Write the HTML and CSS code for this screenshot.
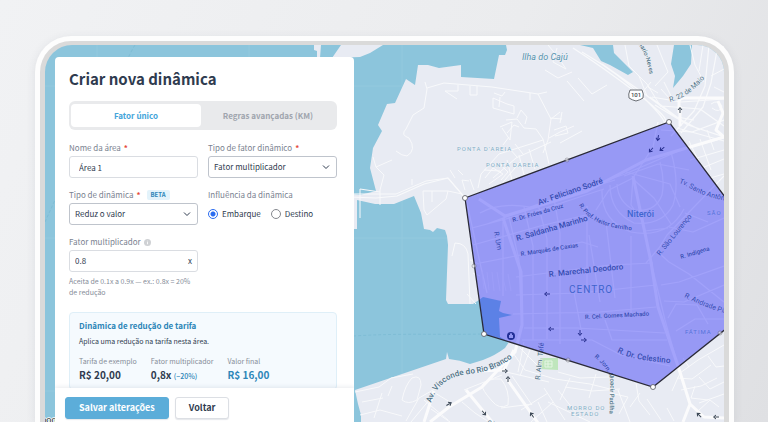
FILE: index.html
```html
<!DOCTYPE html>
<html lang="pt-BR">
<head>
<meta charset="utf-8">
<meta name="viewport" content="width=device-width, initial-scale=1">
<title>Criar nova dinâmica</title>
<link rel="stylesheet" href="styles.css">
</head>
<body>
<div class="device">
<main class="screen">
<svg class="map" viewBox="45 45 679 377" preserveAspectRatio="xMinYMin slice" role="img" aria-label="Mapa de Niterói">
  <defs>
    <path id="p-visconde" d="M431 403C438 381 453 376 469 374C487 372 498 368 514 357"/>
    <path id="p-heitor" d="M579 205C586 218 602 230 645 231"/>
    <path id="p-antonio" d="M679 183C692 187 698 198 740 203"/>
    <path id="p-padilha" d="M594 357C606 367 612 374 610 390L609 435"/>
    <path id="p-celestino" d="M617 352C630 359 645 361 680 364"/>
    <path id="p-andrade" d="M684 297C694 302 710 310 745 319"/>
    <path id="p-neves" d="M637 43C645 52 648 62 652 88"/>
    <path id="p-maio" d="M670 102C682 99 694 92 708 74"/>
    <path id="arrow" d="M-3 0H2M0 -2L2.500 0L0 2"/>
  </defs>
  <rect class="water" x="45" y="45" width="679" height="377"/>
  <path class="grid-line" d="M97 45V422M249 45V422M402 45V422M45 86H724M45 238H724M45 391H724"/>
  <path class="ferry" d="M135 45Q126 60 122 75M45 222L55 200M353 336C400 333 440 335 484 334"/>
  <path class="land" d="M314 45H321L320 58H317V51L314 50ZM332 58L341 45H383L370 53L360 57Z"/>
  <path class="land" d="M506 45L507 50L505 55H499L494 79L461 77V65L439 68L428 65H418L415 85L406 79L395 103L387 104L378 125L382 131L373 148L370 168L376 191L360 195L350 194V229H357V200L375 204H394L414 196L421 213L424 229L430 230L433 232L437 228L445 230L447 236L448 245L446 300L448 304H473L479 300L483 297L501 301L499 311L503 313L512 315L499 318L500 337L509 342L505 348Q496 355 483 360L470 364Q460 360 449 359L447 352L446 359L355 390L358 404L361 415V422H724V45Z"/>
  <path class="water" d="M580 45H613L614 53L633 72L628 75L610 65L601 61L593 48ZM674 45H692L691 64L683 76L673 88L675 76L671 64Z"/>
  <path class="park" d="M540 358H558V370L540 369Z"/>
  <path class="park-mark" d="M545 361H552V367H545ZM548 361V367M545 364H552"/>

  <g class="roads thin">
    <path d="M425 82L427 89L424 108L413 115L406 129Q400 135 409 138Q417 150 407 156Q402 156 396 151M427 88L444 83L492 87L538 94L551 119L548 140L543 153M445 91H458V85M445 91L457 99M470 86V95H477V86M530 93V100M538 94L547 92M551 119L560 112M549 138L560 132L574 126"/>
    <path d="M493 98L507 104L514 106L514 114L493 108ZM500 97L499 107M494 93L502 96L505 92M506 120L517 119L524 128L536 129L543 139M500 127L512 122L510 140L502 128M517 118L521 110L527 117L525 124M507 133L514 125L519 127M509 137L503 145"/>
    <path d="M360 189V218M360 189L380 192M380 205V190L384 175L376 167L392 160M376 167L373 157M353 194L396 194L426 181L448 178L465 198M423 191H448L446 199L427 215L424 210ZM432 191V202M448 191L462 194M412 185V179M455 178L450 170M463 175L458 170M465 190L462 180L469 181M474 190L470 179"/>
    <path d="M478 188L481 174L499 154L543 140M493 178L516 158L551 142M500 186L520 162M512 180L507 160M524 175L519 155M535 169L529 149M549 164L543 139M485 178L493 168L503 174L489 184M499 163L508 172L501 180M509 148L517 157M515 144L523 154M484 170L500 171M489 164L505 164"/>
    <path d="M548 45L558 57L566 69L553 62L557 48M572 72L558 78L545 70M550 118L562 119M554 130L566 126L568 133L555 136M562 112L560 123M560 143L582 131M578 78L592 94L607 85M567 81L584 101"/>
    <path d="M625 45L629 66L647 84L661 107M639 76L647 96M657 45L663 60L668 72L655 86M664 82L671 96M648 87L658 93M651 82L641 94M661 89L670 99M690 45L695 65L704 82M703 45L699 71M711 76L724 69M714 87L724 92M711 104Q718 99 722 106Q720 114 712 108"/>
    <path d="M690 160L724 150M689 141L702 168L724 159M700 139L711 170M677 128L724 141M707 130L714 150M710 178L724 174"/>
    <path d="M452 256L455 243Q466 243 468 254L470 304M467 294L476 304M470 260L479 264M473 273L480 276"/>
    <path d="M355 392L379 387L391 378L413 374M360 415L380 410L402 416M362 402L383 398M382 393L374 418M388 396L392 386M402 400Q405 385 412 378Q421 374 421 385L417 400Q408 405 402 400M406 421L419 398L440 386M411 422L435 393L450 402M424 400L448 420M431 409L450 422M462 402L475 413L489 422M464 390L502 375M482 385Q488 378 501 379Q510 390 508 405Q499 410 492 401Q482 390 482 385"/>
    <path d="M513 353L525 370L555 379L590 384L610 389M520 348L540 368M524 342L518 372M530 350L520 376M502 371L549 382M512 376L532 405M521 410L548 393M531 422L553 402M544 388L565 420M558 390L580 418M570 378L560 400M501 408L532 404M548 402L590 422M538 402L547 422"/>
    <path d="M558 372L580 378L609 377M565 387L592 391L620 389M596 374L589 398M610 393L628 397L619 414M618 390L630 422M636 383L639 401L650 415M640 393L630 407M647 399L661 420M667 408L674 421M672 391L680 373L698 360L724 345M677 378L692 379L711 365M681 390L701 386L717 378M689 367L683 358M695 386L691 398L708 400M699 403L724 394M698 411L710 400L719 407M699 377L710 389L724 382M708 356L716 367L724 366"/>
  </g>
  <g class="roads medium">
    <path d="M350 197L376 198L397 196L424 184L448 178L466 199"/>
    <path d="M573 48Q604 68 638 94T664 122M582 52Q620 74 646 100T661 124M602 64L639 90L676 117L700 130M709 45L705 86L694 111L671 136M718 45L711 83L703 107L681 133M652 97L681 102L724 99M655 105L688 125L724 137M661 130L692 132L724 120M650 97L677 117L694 120M662 106L700 109L724 126"/>
    <path d="M466 199L472 226L480 263L487 293M480 213Q500 202 530 207L625 174L681 150L724 138M487 224L560 197L615 180M472 228L540 210L604 189M473 245L540 226L590 214M480 263L531 253L582 242L598 247M516 277L610 265L653 263M516 295L580 293L656 285M513 314L600 312L656 307M524 328L577 328L665 333M522 340L592 340L621 355L670 366M503 296V222M521 310L519 260L509 217M533 340V246L524 207M547 339V239L538 204M560 344V233L554 198M574 292L583 340M587 293V206M600 302L589 235M615 298L606 222M631 316V236M605 320L612 340L667 340"/>
    <path d="M658 122L653 147L633 178L631 205L643 222L651 262L665 320L679 370M633 178L609 190L596 210M634 180L654 198L671 224M626 172L670 184L680 207M624 176L658 164L689 170M610 185Q610 212 634 223Q662 226 673 205Q680 183 671 152M617 184Q618 202 634 210Q655 213 662 195Q665 180 660 162M602 190Q601 221 631 232Q668 239 684 209M645 231L668 228M646 263L659 248L667 235L724 176M659 253L669 262L689 274L724 302M661 285L679 282L724 266M664 301L684 302L724 285M668 318L676 304L697 305L708 324M676 331L695 319L724 319M669 227L693 232L724 218M685 213L708 222"/>
  </g>
  <g class="roads wide">
    <path d="M633 176L651 262L658 307L679 369L690 404L704 417L724 418M690 404L683 422M503 218L521 272L522 325L515 352L482 387L449 407L430 422M479 199L505 216L587 191L646 160L724 137M679 113V101Q680 98 684 98H724M680 106V126M718 101L723 113L716 130L724 137"/>
    <path d="M476 371L504 370L514 350M507 379L543 430M466 390L493 423M424 422L434 391"/>
  </g>
  <path class="pier" d="M482 272L484 289M487 272L489 290M492 272L494 291M497 272L500 291M502 273L506 291M508 274L511 291"/>

  <g class="label street" font-size="8">
    <text transform="translate(539 205) rotate(-19)">Av. Feliciano Sodré</text>
    <text transform="translate(517 241) rotate(-16)">R. Saldanha Marinho</text>
    <text transform="translate(549 277) rotate(-6)">R. Marechal Deodoro</text>
    <text><textPath href="#p-celestino">R. Dr. Celestino</textPath></text>
    <text><textPath href="#p-visconde">Av. Visconde do Rio Branco</textPath></text>
  </g>
  <g class="label street minor" font-size="7">
    <text transform="translate(660 256) rotate(-51)">R. São Lourenço</text>
    <text transform="translate(494 232) rotate(80)">R. Um</text>
    <text transform="translate(540 380) rotate(-84)">R. Alm. Tefé</text>
    <text transform="translate(491 426) rotate(-50)">R.</text>
    <text><textPath href="#p-antonio">Tv. Santo Antônio</textPath></text>
    <text><textPath href="#p-andrade">R. Andrade Pinto</textPath></text>
    <text><textPath href="#p-maio">R. 22 de Maio</textPath></text>
  </g>
  <g class="label street" font-size="6">
    <text transform="translate(513 222) rotate(-16)">R. Dr. Fróes da Cruz</text>
    <text transform="translate(521 256) rotate(-9)">R. Marquês de Caxias</text>
    <text transform="translate(585 319) rotate(-3)">R. Cel. Gomes Machado</text>
    <text transform="translate(681 259) rotate(-17)">R. Indígena</text>
    <text><textPath href="#p-heitor">R. Prof. Heitor Carrilho</textPath></text>
    <text><textPath href="#p-padilha">R. Jorn. Moacir Padilha</textPath></text>
    <text><textPath href="#p-neves">Mario-Neves</textPath></text>
  </g>
  <g class="label place">
    <text class="island" x="522" y="60">Ilha do Cajú</text>
    <text x="457" y="151">PONTA D'AREIA</text>
    <text x="486" y="167">PONTA DAREIA</text>
    <text class="district" x="569" y="293">CENTRO</text>
    <text class="city" x="627" y="217">Niterói</text>
    <text x="707" y="215">SÃO LOURENÇO</text>
    <text x="685" y="334">FÁTIMA</text>
    <text x="567" y="410">MORRO DO</text>
    <text x="571" y="416">ESTADO</text>
  </g>
  <g class="arrows">
    <use href="#arrow" transform="translate(680 110) rotate(-90)"/>
    <use href="#arrow" transform="translate(658 138) rotate(100)"/>
    <use href="#arrow" transform="translate(651 150) rotate(130)"/>
    <use href="#arrow" transform="translate(662 149) rotate(140)"/>
    <use href="#arrow" transform="translate(547 294) rotate(180)"/>
    <use href="#arrow" transform="translate(551 329) rotate(180)"/>
    <use href="#arrow" transform="translate(580 333) rotate(90)"/>
    <use href="#arrow" transform="translate(584 340)"/>
    <use href="#arrow" transform="translate(505 371)"/>
    <use href="#arrow" transform="translate(508 379) rotate(-90)"/>
    <use href="#arrow" transform="translate(449 404) rotate(-30)"/>
    <use href="#arrow" transform="translate(484 413) rotate(50)"/>
    <use href="#arrow" transform="translate(532 415) rotate(-125)"/>
    <use href="#arrow" transform="translate(699 415) rotate(-135)"/>
    <use href="#arrow" transform="translate(716 417) rotate(180)"/>
  </g>
  <circle cx="511" cy="336" r="4" fill="#31455f"/>
  <path d="M509 335H513V338H509ZM510 335V334Q511 332 512 334V335" fill="#dfe4ee"/>
  <path class="shield" d="M630 90H642Q644 94 643 98Q640 100 636 101Q632 100 629 98Q628 94 630 90Z"/>
  <text class="shield-text" x="636" y="97">101</text>

  <path class="area" d="M465 198L669 122L787 280L653 387L484 334Z"/>
  <g class="handle mid"><circle cx="567" cy="160" r="2"/><circle cx="474" cy="266" r="2"/><circle cx="568" cy="360" r="2"/><circle cx="720" cy="333" r="2"/></g>
  <g class="handle"><circle cx="465" cy="198" r="2.500"/><circle cx="669" cy="122" r="2.500"/><circle cx="484" cy="334" r="2.500"/><circle cx="653" cy="387" r="2.500"/></g>
  <text class="credit" x="35" y="423">Google</text>
</svg>

<form class="panel">
  <div class="panel-body">
    <h1>Criar nova dinâmica</h1>
    <div class="tabs" role="tablist">
      <button type="button" role="tab" aria-selected="true" class="tab active">Fator único</button>
      <button type="button" role="tab" aria-selected="false" class="tab">Regras avançadas (KM)</button>
    </div>
    <div class="fields">
      <div class="field">
        <label for="nome">Nome da área <b class="req">*</b></label>
        <input class="control indent" id="nome" type="text" value="Área 1">
      </div>
      <div class="field">
        <label for="tipo-fator">Tipo de fator dinâmico <b class="req">*</b></label>
        <div class="select-wrap">
          <select class="control" id="tipo-fator"><option>Fator multiplicador</option></select>
          <svg class="chevron" viewBox="0 0 8 8"><path d="M1 2.500L4 5.500L7 2.500"/></svg>
        </div>
      </div>
      <div class="field">
        <label for="tipo-dinamica">Tipo de dinâmica <b class="req">*</b> <span class="badge">BETA</span></label>
        <div class="select-wrap">
          <select class="control" id="tipo-dinamica"><option>Reduz o valor</option></select>
          <svg class="chevron" viewBox="0 0 8 8"><path d="M1 2.500L4 5.500L7 2.500"/></svg>
        </div>
      </div>
      <fieldset class="field">
        <legend>Influência da dinâmica</legend>
        <div class="radios">
          <label><input type="radio" name="influencia" checked>Embarque</label>
          <label><input type="radio" name="influencia">Destino</label>
        </div>
      </fieldset>
      <div class="field">
        <label for="fator">Fator multiplicador
          <svg class="info" viewBox="0 0 8 8"><circle cx="4" cy="4" r="4"/><path d="M4 3.500V6M4 2V2.800"/></svg>
        </label>
        <div class="control suffixed"><input id="fator" type="text" value="0.8"><span>x</span></div>
        <p class="help">Aceita de 0.1x a 0.9x — ex.: 0.8x = 20% de redução</p>
      </div>
    </div>
    <section class="summary">
      <h2>Dinâmica de redução de tarifa</h2>
      <p>Aplica uma redução na tarifa nesta área.</p>
      <dl>
        <div><dt>Tarifa de exemplo</dt><dd>R$ 20,00</dd></div>
        <div><dt>Fator multiplicador</dt><dd>0,8x <small>(−20%)</small></dd></div>
        <div><dt>Valor final</dt><dd class="blue">R$ 16,00</dd></div>
      </dl>
    </section>
  </div>
  <footer class="actions">
    <button class="btn primary" type="submit">Salvar alterações</button>
    <button class="btn" type="button">Voltar</button>
  </footer>
</form>
</main>
</div>
</body>
</html>
```
FILE: styles.css
```css
* { box-sizing: border-box; }

body {
  margin: 0;
  height: 100vh;
  overflow: hidden;
  display: flex;
  padding: 36px 34px 0 35px;
  background: linear-gradient(115deg, #f1f2f4 0%, #ebecee 55%, #dfe0e3 100%);
  font-family: "Noto Sans CJK SC", "Noto Sans", sans-serif;
  font-size: 8px;
  line-height: 12px;
  color: #2f3b4f;
}

h1, h2, p, dl, dd, fieldset, legend { margin: 0; padding: 0; border: 0; }
button, input, select { font: inherit; color: inherit; margin: 0; }

.device {
  flex: 1;
  display: flex;
  border: 5px solid #fdfdfd;
  border-bottom: 0;
  border-radius: 36px 36px 0 0;
  background: #dadada;
  padding: 4px 5px 0;
  box-shadow: 0 2px 10px rgba(60, 70, 90, .1);
}

.screen {
  position: relative;
  flex: 1;
  display: grid;
  grid-template-columns: 299fr 370fr;
  grid-template-rows: minmax(0, 1fr);
  padding: 12px 0 0 10px;
  overflow: hidden;
  border-radius: 27px 27px 0 0;
}

/* map */
.map { position: absolute; inset: 0; width: 100%; height: 100%; font-family: Roboto, sans-serif; }
.water { fill: #8cc5dc; }
.land { fill: #e8ebf3; }
.park { fill: #bfe6bd; }
.park-mark { fill: none; stroke: #e4f5e3; }
.grid-line { fill: none; stroke: #93c9de; }
.ferry { fill: none; stroke: #76b7d0; stroke-dasharray: 3 2; stroke-width: .6; }
.roads { fill: none; stroke: #f8f9fb; stroke-linejoin: round; }
.thin { stroke-width: 1; }
.medium { stroke-width: 1.2; }
.wide { stroke-width: 3; stroke: #fbfbfc; }
.pier { fill: none; stroke: #f1f2f8; }
.label { paint-order: stroke; stroke: #eef1f6; stroke-width: 1; stroke-linejoin: round; }
.street { fill: #4f7286; font-weight: 500; }
.minor { font-weight: 400; }
.place { fill: #7fadc6; font-size: 6px; letter-spacing: 1px; }
.island { font-size: 9px; font-style: italic; fill: #5693af; letter-spacing: 0; }
.district { font-size: 10px; fill: #5f96b3; }
.city { font-size: 9px; font-weight: 500; fill: #5f9bb8; letter-spacing: 0; }
.arrows { fill: none; stroke: #3c4856; stroke-width: 1; }
.shield { fill: #fff; stroke: #6b6f75; }
.shield-text { font-size: 6px; font-weight: 500; text-anchor: middle; fill: #43474c; }
.area { fill: #0808fa; fill-opacity: .36; stroke: #2a2a38; stroke-width: 1.3; }
.handle { fill: #fff; stroke: #55575f; stroke-width: .8; }
.mid { opacity: .5; }
.credit { font-size: 9px; fill: #333; stroke: #fff; stroke-width: 1.5; paint-order: stroke; }

/* panel */
.panel {
  position: relative;
  display: flex;
  flex-direction: column;
  overflow: hidden;
  background: #fff;
  border-radius: 4px 4px 0 0;
}
.panel-body { flex: 1; min-height: 0; overflow: hidden; padding: 11px 17px 0 14px; }

h1 { font-size: 15px; line-height: 22px; font-weight: 700; }

.tabs {
  display: grid;
  grid-template-columns: 65fr 67fr;
  margin: 11px 0 12px;
  padding: 3px 2px;
  border-radius: 6px;
  background: #e9eaec;
}
.tab { height: 23px; padding: 0; border: 0; border-radius: 4px; background: none; font-weight: 700; color: #a0a5ae; }
.tab.active { background: #fff; color: #45a5da; }

.fields { display: grid; grid-template-columns: 1fr 1fr; gap: 12px 10px; }
.field { min-width: 0; color: #7a8290; }
.field > label, legend { display: flex; align-items: center; gap: 3px; height: 12px; margin-bottom: 2px; white-space: nowrap; }
.req { color: #e5483a; }
.badge { margin-left: 3px; padding: 0 4px; border-radius: 2px; background: #e3f3fb; color: #2d86b8; font-size: 6px; font-weight: 700; line-height: 10px; }

.control {
  display: block;
  width: 100%;
  height: 22px;
  padding: 0 5px;
  border: 1px solid #dadde2;
  border-radius: 3px;
  background: #fff;
  color: #2f3b4f;
}
.field { height: 35px; }
.indent { padding-left: 9px; }
.select-wrap { position: relative; }
select.control { appearance: none; border-color: #bfc4cc; }
.chevron { position: absolute; right: 7px; top: 7px; width: 8px; height: 8px; fill: none; stroke: #2f3b4f; pointer-events: none; }
.suffixed { display: flex; align-items: center; }
.suffixed input { flex: 1; min-width: 0; padding: 0; border: 0; background: none; outline: 0; }
.info { width: 7px; height: 7px; fill: #cfd1d4; stroke: none; }
.info path { stroke: #fff; }
.radios { display: flex; gap: 10px; height: 22px; align-items: center; color: #2f3b4f; }
.radios label { display: flex; align-items: center; gap: 4px; }
.radios input {
  appearance: none;
  width: 10px;
  height: 10px;
  border: 1px solid #85888e;
  border-radius: 50%;
}
.radios input:checked { border-color: #2a6cf0; background: radial-gradient(circle, #2a6cf0 0 2px, #fff 3px); }
.field:last-child { height: auto; }
.help { margin-top: 4px; font-size: 7px; line-height: 11px; color: #858c98; }

.summary { margin-top: 14px; padding: 7px 9px; border: 1px solid #dfeff8; border-radius: 4px; background: #f5fafe; }
h2 { font-size: 8px; line-height: 12px; font-weight: 700; color: #2d86b8; }
.summary p { margin-top: 3px; font-size: 7px; }
dl { display: flex; gap: 14px; margin-top: 9px; white-space: nowrap; }
dt { font-size: 7px; line-height: 10px; color: #858c98; }
dd { margin-top: 3px; font-size: 10px; font-weight: 700; }
small { font-size: 7px; font-weight: 500; color: #2d86b8; }
.blue { color: #2d86b8; }

.actions { position: relative; display: flex; gap: 6px; padding: 9px 10px 3px; background: #fff; box-shadow: 0 -1px 4px rgba(40, 60, 90, .1); }
.btn { height: 22px; padding: 0 13px; border: 1px solid #dcdfe4; border-radius: 3px; background: #fff; font-size: 9px; font-weight: 700; box-shadow: 0 1px 1px rgba(40, 60, 90, .12); }
.primary { border-color: #5cadd9; background: #5cadd9; color: #fff; }
```
